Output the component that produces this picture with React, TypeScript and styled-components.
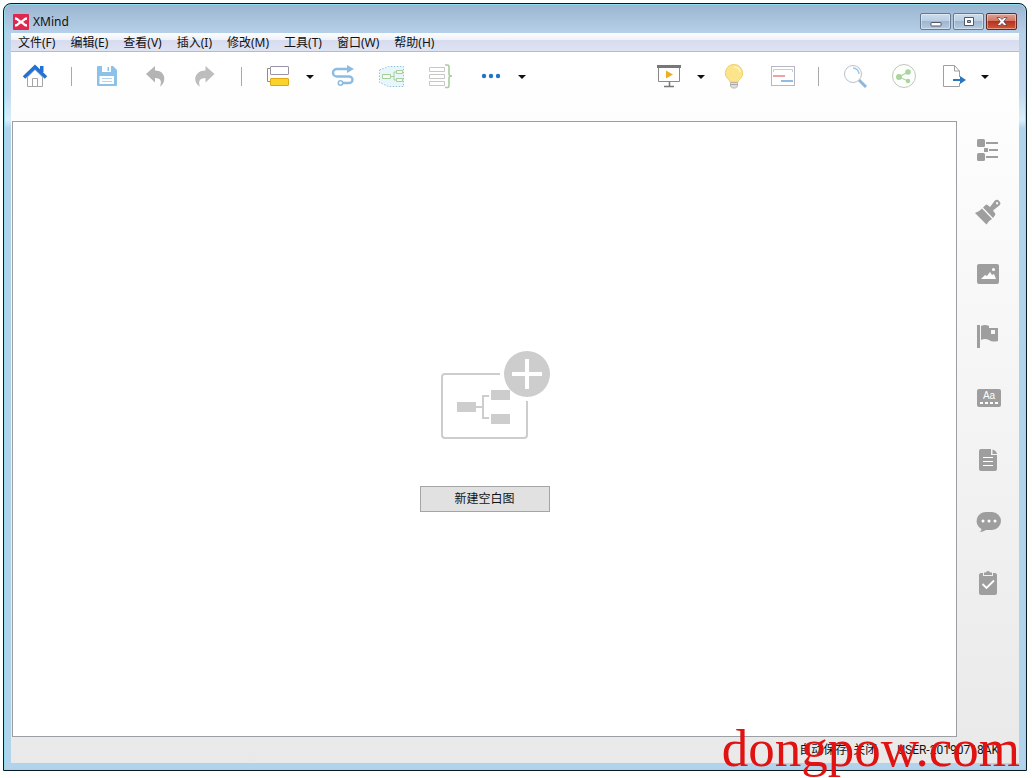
import React from 'react';
import styled, { createGlobalStyle } from 'styled-components';

const GlobalStyle = createGlobalStyle`
  * { box-sizing: border-box; }
  body {
    margin: 0;
    background: #fdfffe;
    color: #111;
    font: 12px/16px "Noto Sans", "Noto Sans CJK SC", sans-serif;
  }
  button { font: inherit; color: inherit; margin: 0; padding: 0; }
`;

const Desktop = styled.div`
  position: relative;
  display: flex;
  height: 100vh;
  min-height: 660px;
  padding: 3px 5px 7px 3px;
`;

const WindowFrame = styled.div`
  flex: 1;
  display: flex;
  flex-direction: column;
  min-width: 0;
  padding: 0 7px 7px;
  border: 1px solid #0c1a24;
  border-radius: 8px 8px 0 0;
  background: linear-gradient(#9ab5d0 0, #b7d0e9 29px, #c3dbf0 90px, #d9effa 116px, #b2d3ec 124px, #b2d3ec 100%);
  box-shadow: inset 0 0 0 1px #8fdcf0;
`;

const TitleBar = styled.header`
  display: flex;
  align-items: center;
  gap: 4px;
  height: 29px;
  padding: 6px 2px 0;
`;

const Title = styled.h1`
  flex: 1;
  margin: 0;
  font-size: 12px;
  font-weight: 400;
`;

const WindowButtons = styled.div`
  display: flex;
  gap: 2px;
`;

const WindowButton = styled.button<{ $close?: boolean }>`
  display: grid;
  place-items: center;
  width: 31px;
  height: 17px;
  border: 1px solid ${p => (p.$close ? '#5c2b2b' : '#66798f')};
  border-radius: 2px;
  background: ${p => (p.$close
    ? 'linear-gradient(#e2a193 0, #cf7561 48%, #b8321b 50%, #cf5a3a 100%)'
    : 'linear-gradient(#ccdcec 0, #b9cde2 48%, #9fb6cf 50%, #b4cae1 100%)')};
  box-shadow: inset 0 0 0 1px rgba(255, 255, 255, 0.4);
`;

const MenuBar = styled.nav`
  display: flex;
  gap: 15px;
  height: 19px;
  padding: 0 7px;
  border-bottom: 1px solid #b4bccb;
  background: linear-gradient(#fcfdfe 0, #eef1f8 38%, #d7dbef 42%, #dfe4f3 100%);
`;

const MenuItem = styled.button`
  border: 0;
  background: none;
  line-height: 20px;
  white-space: nowrap;
`;

const Client = styled.div`
  flex: 1;
  display: flex;
  flex-direction: column;
  min-height: 0;
  background: linear-gradient(#fff 0, #fdfdfd 68px, #e9e9e9 100%);
`;

const Toolbar = styled.div`
  display: flex;
  justify-content: space-between;
  height: 67px;
  padding-right: 26px;
`;

const ToolGroup = styled.div`
  display: flex;
`;

const ToolButton = styled.button`
  display: grid;
  place-items: center;
  width: 49px;
  height: 49px;
  border: 0;
  background: none;
`;

const ArrowButton = styled(ToolButton)`
  width: 16px;
`;

const Separator = styled.div`
  width: 1px;
  height: 19px;
  margin: 15px 11px;
  background: #a9a9a9;
`;

const Workspace = styled.div`
  flex: 1;
  display: flex;
  min-height: 0;
`;

const Editor = styled.main`
  flex: 1;
  display: flex;
  flex-direction: column;
  align-items: center;
  justify-content: center;
  gap: 47px;
  margin: 2px 0 0 1px;
  padding-top: 5px;
  border: 1px solid #9b9fa3;
  background: #fff;
`;

const NewMapButton = styled.button`
  width: 130px;
  height: 26px;
  border: 1px solid #a5a5a5;
  background: #e1e1e1;
`;

const SidePanel = styled.aside`
  display: flex;
  flex-direction: column;
  width: 62px;
`;

const SideButton = styled.button`
  display: grid;
  place-items: center;
  height: 62px;
  border: 0;
  background: none;
`;

const StatusBar = styled.footer`
  display: flex;
  align-items: center;
  justify-content: flex-end;
  gap: 20px;
  height: 26px;
  padding-right: 20px;
  font-family: Roboto, "Noto Sans CJK SC", sans-serif;
`;

const Watermark = styled.div`
  position: absolute;
  right: 12px;
  bottom: 0;
  color: #e01212;
  font: 53px/60px "Liberation Serif", serif;
  pointer-events: none;
`;

const menus = ['文件(F)', '编辑(E)', '查看(V)', '插入(I)', '修改(M)', '工具(T)', '窗口(W)', '帮助(H)'];

function Tool({ label, children }: { label: string; children: React.ReactNode }) {
  return (
    <ToolButton type="button" aria-label={label}>
      <svg width="29" height="29" viewBox="0 0 29 29" fill="none">{children}</svg>
    </ToolButton>
  );
}

function Arrow({ label }: { label: string }) {
  return (
    <ArrowButton type="button" aria-label={label}>
      <svg width="8" height="4" viewBox="0 0 8 4"><path d="M0 0h8L4 4z" fill="#111" /></svg>
    </ArrowButton>
  );
}

function Side({ label, children }: { label: string; children: React.ReactNode }) {
  return (
    <SideButton type="button" aria-label={label}>
      <svg width="30" height="30" viewBox="0 0 30 30" fill="#9e9e9e">{children}</svg>
    </SideButton>
  );
}

export default function App() {
  return (
    <Desktop>
      <GlobalStyle />
      <WindowFrame>
        <TitleBar>
          <svg width="16" height="16" viewBox="0 0 16 16" aria-hidden="true">
            <rect width="16" height="16" rx="1" fill="#e0284f" />
            <path d="M2 4.500c3.500 0 3.500 3.200 6 3.200s2.500-3.200 6-3.200M2 11.500c3.500 0 3.500-3.200 6-3.200s2.500 3.200 6 3.200" fill="none" stroke="#fff" strokeWidth="2.400" />
          </svg>
          <Title>XMind</Title>
          <WindowButtons>
            <WindowButton type="button" aria-label="最小化">
              <svg width="12" height="11" viewBox="0 0 12 11"><rect x="1" y="6.500" width="10" height="3.500" rx=".5" fill="#fff" stroke="#535666" /></svg>
            </WindowButton>
            <WindowButton type="button" aria-label="最大化">
              <svg width="12" height="11" viewBox="0 0 12 11"><path d="M1.500 1.500h9v8h-9zM4.500 4.500v2h3v-2z" fill="#fff" fillRule="evenodd" stroke="#535666" /></svg>
            </WindowButton>
            <WindowButton type="button" aria-label="关闭" $close>
              <svg width="12" height="11" viewBox="0 0 12 11"><path d="M1 1.500h3L6 3.500l2-2h3L7.800 5.500 11 9.500H8l-2-2-2 2H1l3.200-4z" fill="#fff" stroke="#574656" strokeWidth=".8" /></svg>
            </WindowButton>
          </WindowButtons>
        </TitleBar>
        <MenuBar>
          {menus.map(m => <MenuItem type="button" key={m}>{m}</MenuItem>)}
        </MenuBar>
        <Client>
          <Toolbar>
            <ToolGroup>
              <Tool label="主页">
                <path d="M6.500 15v9.500h15V15L14 7.500z" fill="#fff" stroke="#a5a5a5" />
                <path d="M11.500 24.500v-8h5v8" stroke="#a5a5a5" />
                <path d="M19 4h3.500v6H19z" fill="#2371d2" />
                <path d="M3 15.500L14 5 25 15.500" stroke="#2371d2" strokeWidth="3.500" />
              </Tool>
              <Separator />
              <Tool label="保存">
                <path d="M4 5q0-1 1-1h15l4 4v15q0 1-1 1H5q-1 0-1-1z" fill="#8cc1e8" />
                <path d="M9 4h9v6H9zM6.500 14h14.500v8H6.500z" fill="#fff" />
                <path d="M14.500 5H16v4h-1.500z" fill="#8cc1e8" />
                <path d="M9 16.500h10M9 19.500h10" stroke="#b2d3ea" />
              </Tool>
              <Tool label="撤销">
                <path d="M4 12l9-8v4.500c7 0 10.500 5 9 10.500-.7 2.500-2 4.500-4 5.500 2-5 1-8.500-5-8.500v4.500z" fill="#b4b4b4" />
              </Tool>
              <Tool label="重做">
                <path d="M23.500 12l-9-8v4.500c-7 0-11.500 5-10 10.500.7 2.500 2 4.500 4.500 5.500-2-5-.5-8.500 5.500-8.500v4.500z" fill="#bdbdbd" />
              </Tool>
              <Separator />
              <Tool label="主题">
                <path d="M7 6.500H4.500v13H7" stroke="#8d8d8d" />
                <rect x="7.500" y="4.500" width="18" height="8" rx=".5" fill="#fff" stroke="#9b93a3" />
                <rect x="7.500" y="16.500" width="18" height="7" rx=".5" fill="#fdd12c" stroke="#dfa916" />
              </Tool>
              <Arrow label="主题选项" />
              <Tool label="联系">
                <path d="M19 7H9a4 3.750 0 0 0 0 7.500h12a3.500 3.250 0 0 1 0 6.500h-6" stroke="#8dbce3" strokeWidth="2.400" />
                <path d="M19 3l7 4-7 4z" fill="#8dbce3" />
                <circle cx="12.500" cy="21" r="2.200" fill="#fff" stroke="#8dbce3" strokeWidth="1.600" />
              </Tool>
              <Tool label="外框">
                <path d="M2.500 8l9-3.500h15v20h-15l-9-4z" fill="#e8f5fb" stroke="#91c4d8" strokeDasharray="1.500 1.500" />
                <path d="M14 14.500h3m2-4.500h-2v8h2" stroke="#a4cf9b" />
                <path d="M5.500 12.500h8v4h-8zM19.500 8.500h6v3h-6zM19.500 16.500h6v3h-6z" fill="#f5fbf2" stroke="#a4cf9b" />
              </Tool>
              <Tool label="概要">
                <path d="M3.500 5.500h15v4h-15zM3.500 12.500h15v4h-15zM3.500 19.500h15v4h-15z" stroke="#c7c7c7" />
                <path d="M19 3h2.500q1.500 0 1.500 2v7q0 2 3 2-3 0-3 2v7.500q0 2-1.500 2H19" stroke="#a9cca0" strokeWidth="1.600" />
              </Tool>
              <Tool label="更多">
                <g fill="#2373ca"><circle cx="9" cy="14" r="2.200" /><circle cx="16" cy="14" r="2.200" /><circle cx="23" cy="14" r="2.200" /></g>
              </Tool>
              <Arrow label="更多选项" />
            </ToolGroup>
            <ToolGroup>
              <Tool label="演示">
                <path d="M4.500 5v14.500h21V5" fill="#fff" stroke="#898989" />
                <path d="M3 3h24v3H3z" fill="#777" />
                <path d="M12 8.500l7 4-7 4z" fill="#efad25" />
                <path d="M15.500 20v4M10 24.500h10" stroke="#777" strokeWidth="1.500" />
              </Tool>
              <Arrow label="演示选项" />
              <Tool label="头脑风暴">
                <path d="M15 2.500a8.500 8.500 0 0 1 5.500 15q-1 1-1.500 2.500h-8q-.5-1.500-1.500-2.500a8.500 8.500 0 0 1 5.500-15z" fill="#fce48b" stroke="#eed074" />
                <path d="M15 5a6 6 0 0 1 6 5" stroke="#fff6cc" strokeWidth="1.500" />
                <path d="M11.500 20.500h7v4l-2 1.500h-3l-2-1.500z" fill="#ddd" stroke="#b3aaa0" strokeWidth=".8" />
                <path d="M11.500 22.500h7" stroke="#aaa" />
              </Tool>
              <Tool label="甘特图">
                <rect x="3.500" y="4.500" width="23" height="19" fill="#fff" stroke="#b7b7c4" />
                <path d="M5.500 10V7.500h19V10" stroke="#c2cedb" />
                <path d="M5 14h12" stroke="#eca1a5" strokeWidth="2" />
                <path d="M13 19h12" stroke="#91bde2" strokeWidth="2" />
              </Tool>
              <Separator />
              <Tool label="搜索">
                <path d="M19 18l7 7" stroke="#8db8db" strokeWidth="3" />
                <circle cx="13" cy="12" r="8.500" fill="#fcfeff" stroke="#bcc2c8" />
                <path d="M13 6a6 6 0 0 1 6 6" stroke="#9dc7e9" strokeWidth="1.500" />
              </Tool>
              <Tool label="分享">
                <circle cx="15" cy="14" r="11.500" fill="#fdfffc" stroke="#bcc9b8" />
                <path d="M19 10l-9 5 9 4" stroke="#a9d49e" strokeWidth="1.200" />
                <g fill="#a9d49e"><circle cx="10" cy="15" r="3" /><circle cx="19" cy="10" r="2.800" /><circle cx="19" cy="19" r="2.200" /></g>
              </Tool>
              <Tool label="导出">
                <path d="M5.500 3.500h11l5 5.500v15.500h-16z" fill="#fff" />
                <path d="M21.500 15V9l-5-5.500h-11v21h16V21M16.500 3.500V9h5" stroke="#a0a0a0" />
                <path d="M15 18h8" stroke="#2b77bd" strokeWidth="2" />
                <path d="M22 14l6 4-6 4z" fill="#2b77bd" />
              </Tool>
              <Arrow label="导出选项" />
            </ToolGroup>
          </Toolbar>
          <Workspace>
            <Editor>
              <svg width="130" height="88" viewBox="0 0 130 88" fill="none" aria-hidden="true">
                <path d="M80 23H25q-3 0-3 3v58q0 3 3 3h79q3 0 3-3V50" stroke="#cdcdcd" strokeWidth="2" />
                <path d="M56 56h7M69 45h-6v22h6" stroke="#cdcdcd" strokeWidth="2" />
                <path d="M37 51h19v10H37zM71 39h19v10H71zM71 63h19v10H71z" fill="#cdcdcd" />
                <circle cx="107" cy="23" r="23" fill="#cdcdcd" />
                <path d="M107 8v30M92 23h30" stroke="#fff" strokeWidth="4" />
              </svg>
              <NewMapButton type="button">新建空白图</NewMapButton>
            </Editor>
            <SidePanel>
              <Side label="大纲">
                <rect x="4" y="4" width="8" height="8" rx="1.500" />
                <rect x="11" y="13" width="4" height="4" rx=".5" />
                <rect x="4" y="18" width="8" height="8" rx="1.500" />
                <path d="M13 7h12v2H13zM16 14h9v2h-9zM13 21h12v2H13z" />
              </Side>
              <Side label="格式">
                <path d="M2 16q4-1 7-4.500L19 22q-4 2-5.500 5.500zM10 10.500l2.500-2.500q1-.8 2 0l2.500 2 4.500-6a3.300 3.300 0 0 1 4.800 4.600L20 13.500l2 2.700q.8 1 0 2L20 21zM24 5a1.200 1.200 0 1 0 .1 0z" fillRule="evenodd" />
              </Side>
              <Side label="图片">
                <rect x="4" y="5" width="22" height="20" rx="2" />
                <path d="M8 20l4-4 2 1 3-4 2 3 2-1 2 5z" fill="#fff" />
                <circle cx="20.500" cy="10.500" r="1.500" fill="#fff" />
              </Side>
              <Side label="图标">
                <path d="M4 4h3v23H4zM8 5q4-2 8 0v2h9v13q-6 1.500-9-1-4-2-8 0zM18 9v4h4V9z" fillRule="evenodd" />
              </Side>
              <Side label="标签">
                <rect x="4" y="6" width="24" height="18" rx="2" />
                <text x="16" y="16" textAnchor="middle" fontFamily="Liberation Sans, sans-serif" fontSize="10" fill="#fff">Aa</text>
                <path d="M7 20h18" stroke="#fff" strokeWidth="2" strokeDasharray="3 2" />
              </Side>
              <Side label="备注">
                <path d="M8 4h10v6h6v14q0 2-2 2H8q-2 0-2-2V6q0-2 2-2zM19.500 4.500q4 1 4.500 4.500h-4.500z" />
                <path d="M10 12.500h10M10 16.500h10M10 20.500h10" stroke="#fff" />
              </Side>
              <Side label="批注">
                <path d="M13 5h6a9 9 0 0 1 0 18h-6q-3 2-6.500 2 2-1 2-3A9 9 0 0 1 13 5z" />
                <g fill="#fff"><circle cx="10" cy="14" r="1.500" /><circle cx="16" cy="14" r="1.500" /><circle cx="22" cy="14" r="1.500" /></g>
              </Side>
              <Side label="任务">
                <path d="M8 4h2v3h10V4h2q2 0 2 2v18q0 2-2 2H8q-2 0-2-2V6q0-2 2-2zM11 3.500h2q0-1.500 2-1.500t2 1.500h2V6h-8z" />
                <path d="M9.500 15l4 4 7.500-7.500" fill="none" stroke="#fff" strokeWidth="1.800" />
              </Side>
            </SidePanel>
          </Workspace>
          <StatusBar>
            <span>自动保存: 关闭</span>
            <span>USER-20190718AK</span>
          </StatusBar>
        </Client>
      </WindowFrame>
      <Watermark>dongpow.com</Watermark>
    </Desktop>
  );
}
